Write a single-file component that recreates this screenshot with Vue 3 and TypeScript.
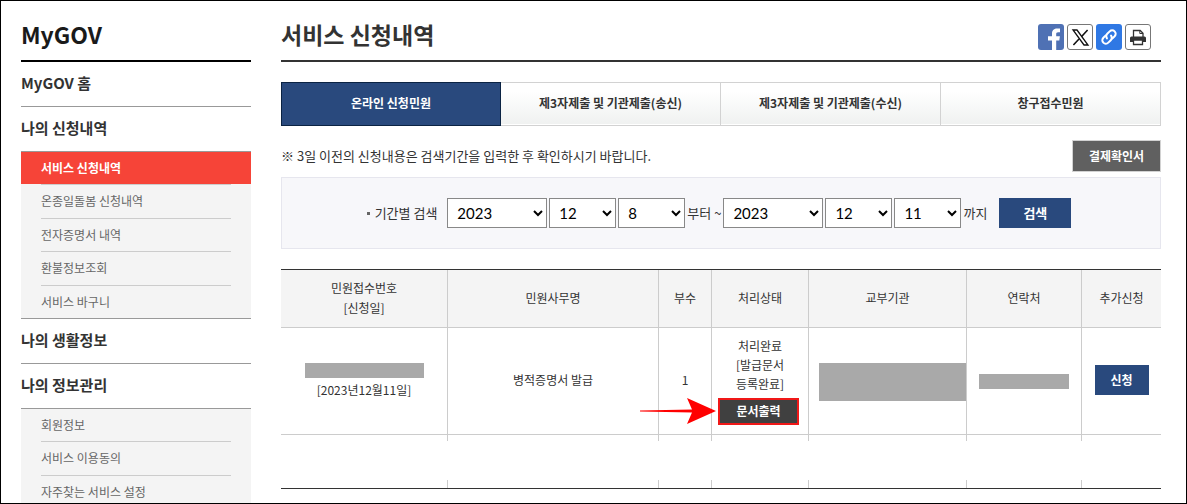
<script setup lang="ts">
import { ref } from 'vue'

interface MenuSection {
  title: string
  items: string[]
}

const sections: MenuSection[] = [
  { title: 'MyGOV 홈', items: [] },
  {
    title: '나의 신청내역',
    items: ['서비스 신청내역', '온종일돌봄 신청내역', '전자증명서 내역', '환불정보조회', '서비스 바구니'],
  },
  { title: '나의 생활정보', items: [] },
  { title: '나의 정보관리', items: ['회원정보', '서비스 이용동의', '자주찾는 서비스 설정'] },
]
const currentItem = '서비스 신청내역'

const tabs: string[] = ['온라인 신청민원', '제3자제출 및 기관제출(송신)', '제3자제출 및 기관제출(수신)', '창구접수민원']
const activeTab = ref(0)

const years: number[] = [2021, 2022, 2023]
const months: number[] = Array.from({ length: 12 }, (_, i) => i + 1)
const days: number[] = Array.from({ length: 31 }, (_, i) => i + 1)

const from = ref({ year: 2023, month: 12, day: 8 })
const to = ref({ year: 2023, month: 12, day: 11 })
</script>

<template>
  <div class="page">
    <aside class="sidebar">
      <h2 class="side-title">MyGOV</h2>
      <nav aria-label="MyGOV">
        <section v-for="s in sections" :key="s.title">
          <h3 class="side-head"><a href="#">{{ s.title }}</a></h3>
          <ul v-if="s.items.length" class="side-list" :class="{ short: s.items.length < 5 }">
            <li v-for="item in s.items" :key="item" :class="{ on: item === currentItem }">
              <a href="#">{{ item }}</a>
            </li>
          </ul>
        </section>
      </nav>
    </aside>

    <main class="content">
      <header class="title-bar">
        <h1>서비스 신청내역</h1>
        <div class="share">
          <button type="button" class="icon facebook" aria-label="페이스북">
            <svg viewBox="0 0 26 26"><path fill="#fff" d="M14 26V16.4h-4v-4.2h4V9.4c0-3.4 2.2-5 5.2-5H22v3.900h-1.800c-1.600 0-2 .7-2 1.900v2h3.700l-.6 4.200h-3.100V26z" /></svg>
          </button>
          <button type="button" class="icon outlined" aria-label="X">
            <svg viewBox="0 0 26 26" fill="none" stroke="#111">
              <path stroke-width="1.3" d="M6 6h4l11 15h-4z" />
              <path stroke-width="1.6" d="M20.6 6l-6.2 6.800M12 15l-5.600 6" />
            </svg>
          </button>
          <button type="button" class="icon link" aria-label="링크 복사">
            <svg viewBox="0 0 26 26" fill="none" stroke="#fff" stroke-width="2" stroke-linecap="round">
              <g transform="rotate(-45 13 13)">
                <path d="M11.500 9.500H8.500a3.500 3.500 0 0 0 0 7h3.500a3.500 3.500 0 0 0 3.400-3" />
                <path d="M14.500 16.500h3a3.500 3.500 0 0 0 0-7h-3.500a3.500 3.500 0 0 0-3.400 3" />
              </g>
            </svg>
          </button>
          <button type="button" class="icon outlined" aria-label="인쇄">
            <svg viewBox="0 0 26 26">
              <path fill="#fff" stroke="#333" stroke-width="1.300" d="M8.500 13V6.500h6.700l2.800 2.800V13" />
              <path fill="none" stroke="#333" d="M14.800 6.500v3H18" />
              <path fill="#333" d="M6.500 12.500h13a1.500 1.500 0 0 1 1.500 1.500v4H5v-4a1.500 1.500 0 0 1 1.500-1.500z" />
              <path fill="#fff" stroke="#333" stroke-width="1.300" d="M8.500 16h9v4.500h-9z" />
            </svg>
          </button>
        </div>
      </header>

      <div class="tabs" role="tablist">
        <button
          v-for="(tab, i) in tabs"
          :key="tab"
          type="button"
          role="tab"
          class="tab"
          :class="{ active: i === activeTab }"
          :aria-selected="i === activeTab"
          @click="activeTab = i"
        >{{ tab }}</button>
      </div>

      <div class="notice">
        <p>※ 3일 이전의 신청내용은 검색기간을 입력한 후 확인하시기 바랍니다.</p>
        <button type="button" class="receipt">결제확인서</button>
      </div>

      <form class="search" @submit.prevent>
        <label class="search-label" for="from-year">기간별 검색</label>
        <select id="from-year" v-model="from.year" class="year">
          <option v-for="y in years" :key="y" :value="y">{{ y }}</option>
        </select>
        <select v-model="from.month" aria-label="시작 월">
          <option v-for="m in months" :key="m" :value="m">{{ m }}</option>
        </select>
        <select v-model="from.day" aria-label="시작 일">
          <option v-for="d in days" :key="d" :value="d">{{ d }}</option>
        </select>
        <span>부터 ~</span>
        <select v-model="to.year" class="year" aria-label="종료 연도">
          <option v-for="y in years" :key="y" :value="y">{{ y }}</option>
        </select>
        <select v-model="to.month" aria-label="종료 월">
          <option v-for="m in months" :key="m" :value="m">{{ m }}</option>
        </select>
        <select v-model="to.day" aria-label="종료 일">
          <option v-for="d in days" :key="d" :value="d">{{ d }}</option>
        </select>
        <span>까지</span>
        <button type="submit" class="primary submit">검색</button>
      </form>

      <table class="list">
        <colgroup>
          <col class="c-no"><col><col class="c-count"><col class="c-state"><col class="c-org"><col class="c-tel"><col class="c-add">
        </colgroup>
        <thead>
          <tr>
            <th scope="col">민원접수번호<br>[신청일]</th>
            <th scope="col">민원사무명</th>
            <th scope="col">부수</th>
            <th scope="col">처리상태</th>
            <th scope="col">교부기관</th>
            <th scope="col">연락처</th>
            <th scope="col">추가신청</th>
          </tr>
        </thead>
        <tbody>
          <tr class="entry">
            <td><span class="mask number"></span>[2023년12월11일]</td>
            <td>병적증명서 발급</td>
            <td>1</td>
            <td class="state">
              처리완료<br>[발급문서<br>등록완료]
              <div class="print-wrap">
                <button type="button" class="print">문서출력</button>
                <svg class="arrow" viewBox="0 0 76 26" aria-hidden="true">
                  <path fill="#f00" d="M0 12.500L52 11.500 47 0 76 13 47 26 52 14.500 0 13.500z" />
                </svg>
              </div>
            </td>
            <td><span class="mask org"></span></td>
            <td><span class="mask tel"></span></td>
            <td><button type="button" class="primary apply">신청</button></td>
          </tr>
          <tr class="stub"><td v-for="n in 7" :key="n"></td></tr>
          <tr class="blank"><td colspan="7"></td></tr>
          <tr class="stub end"><td v-for="n in 7" :key="n"></td></tr>
        </tbody>
      </table>
    </main>
  </div>
</template>

<style>
body {
  margin: 0;
}
</style>

<style scoped>
* {
  box-sizing: border-box;
}

.page {
  display: flex;
  gap: 30px;
  height: 100vh;
  overflow: hidden;
  padding: 0 25px 0 20px;
  border: 1px solid #000;
  background: #fff;
  color: #333;
  font-family: "Noto Sans CJK KR", sans-serif;
  font-size: 12px;
  line-height: 20px;
}

button {
  padding: 0;
  font-family: inherit;
  font-size: 12px;
  font-weight: 700;
  line-height: 20px;
  cursor: pointer;
}

a {
  color: inherit;
  text-decoration: none;
}

h1,
h2,
h3,
p,
ul {
  margin: 0;
  padding: 0;
}

.sidebar {
  flex: 0 0 230px;
}

.side-title {
  height: 61px;
  border-bottom: 2px solid #000;
  color: #1a1a1a;
  font-size: 23px;
  font-weight: 700;
  line-height: 66px;
}

.side-head {
  height: 45px;
  border-bottom: 1px solid #999;
  font-size: 15px;
  font-weight: 700;
  line-height: 42px;
}

.side-list {
  display: grid;
  grid-template-rows: 32px;
  grid-auto-rows: 1fr;
  height: 167px;
  border-bottom: 1px solid #999;
  background: #f4f4f4;
  color: #666;
  list-style: none;
}

.side-list.short {
  height: 100px;
}

.side-list li {
  padding: 0 20px;
}

.side-list a {
  display: block;
  line-height: 32px;
}

.side-list li + li a {
  border-top: 1px solid #ccc;
}

.side-list .on {
  background: #f64438;
  color: #fff;
  font-weight: 700;
}

.content {
  flex: 1;
  min-width: 0;
}

.title-bar {
  display: flex;
  justify-content: space-between;
  height: 61px;
  padding-right: 10px;
  border-bottom: 2px solid #333;
}

h1 {
  font-size: 23px;
  font-weight: 700;
  line-height: 66px;
}

.share {
  display: flex;
  gap: 3px;
  padding-top: 23px;
}

.icon {
  width: 26px;
  height: 26px;
  overflow: hidden;
  border: 0;
  border-radius: 3px;
}

.icon svg {
  display: block;
  width: 26px;
  height: 26px;
}

.facebook {
  background: #4f71b4;
}

.link {
  background: #2f78e4;
}

.outlined {
  border: 1px solid #777;
  background: #fff;
}

.outlined svg {
  margin: -1px;
}

.tabs {
  display: flex;
  margin-top: 20px;
}

.tab {
  flex: 0 0 25%;
  height: 44px;
  padding-bottom: 2px;
  border: 1px solid #d2d2d2;
  border-left: 0;
  background: linear-gradient(#fff 20%, #eff1f0);
  box-shadow: inset 0 -1px #fff;
  color: #333;
}

.tab.active {
  border: 1px solid #0b2343;
  background: #29497d;
  box-shadow: none;
  color: #fff;
}

.notice {
  display: flex;
  align-items: center;
  justify-content: space-between;
  margin: 14px 0 5px;
  font-size: 13px;
}

.receipt {
  width: 89px;
  height: 32px;
  border: 1px solid #d2d2d2;
  background: #606060;
  color: #fff;
}

.search {
  display: flex;
  align-items: center;
  justify-content: center;
  gap: 2px;
  padding: 20px 4px 20px 0;
  border: 1px solid #e6e6ee;
  background: #f7f7fa;
  font-size: 13px;
}

.search-label {
  display: flex;
  align-items: center;
  gap: 5px;
  margin-right: 8px;
}

.search-label::before {
  width: 3px;
  height: 3px;
  background: #666;
  content: "";
}

select {
  width: 67px;
  height: 30px;
  padding: 0 0 0 5px;
  border: 1px solid #888;
  border-radius: 0;
  background: #fff;
  color: #000;
  font-family: Lato, "Noto Sans CJK KR", sans-serif;
  font-size: 15px;
}

.year {
  width: 100px;
}

.primary {
  border: 0;
  background: #29497d;
  color: #fff;
}

.submit {
  width: 72px;
  height: 30px;
  margin-left: 10px;
  font-size: 13px;
}

.list {
  width: 100%;
  margin-top: 20px;
  border-top: 1px solid #333;
  border-bottom: 1px solid #333;
  border-spacing: 0;
  table-layout: fixed;
  text-align: center;
}

.c-no {
  width: 167px;
}

.c-count {
  width: 53px;
}

.c-state {
  width: 97px;
}

.c-org {
  width: 158px;
}

.c-tel {
  width: 115px;
}

.c-add {
  width: 79px;
}

th,
td {
  padding: 0;
  border-right: 1px solid #ccc;
  border-bottom: 1px solid #ccc;
}

th:last-child,
td:last-child {
  border-right: 0;
}

th {
  height: 58px;
  padding-bottom: 2px;
  background: #f4f4f4;
  font-weight: 400;
}

.entry td {
  height: 107px;
  padding-bottom: 2px;
}

.entry .state {
  line-height: 19px;
}

.stub td,
.blank td {
  height: 6px;
  border-bottom: 0;
}

.blank td {
  height: 39px;
}

.end td {
  height: 8px;
}

.mask {
  display: block;
  height: 15px;
  margin: 2px auto;
  background: #a9a9a9;
}

.number {
  width: 119px;
}

.org {
  width: 147px;
  height: 38px;
  margin: 4px 0 0 auto;
}

.tel {
  width: 90px;
  margin-bottom: 0;
}

.print-wrap {
  position: relative;
  width: 81px;
  margin: 5px auto 0 6px;
}

.print {
  display: block;
  width: 100%;
  height: 27px;
  border: 2px solid #f01818;
  background: #404040;
  color: #fff;
}

.arrow {
  position: absolute;
  top: 0;
  right: 100%;
  width: 76px;
  height: 26px;
  margin-right: 2px;
}

.apply {
  width: 54px;
  height: 30px;
}
</style>
